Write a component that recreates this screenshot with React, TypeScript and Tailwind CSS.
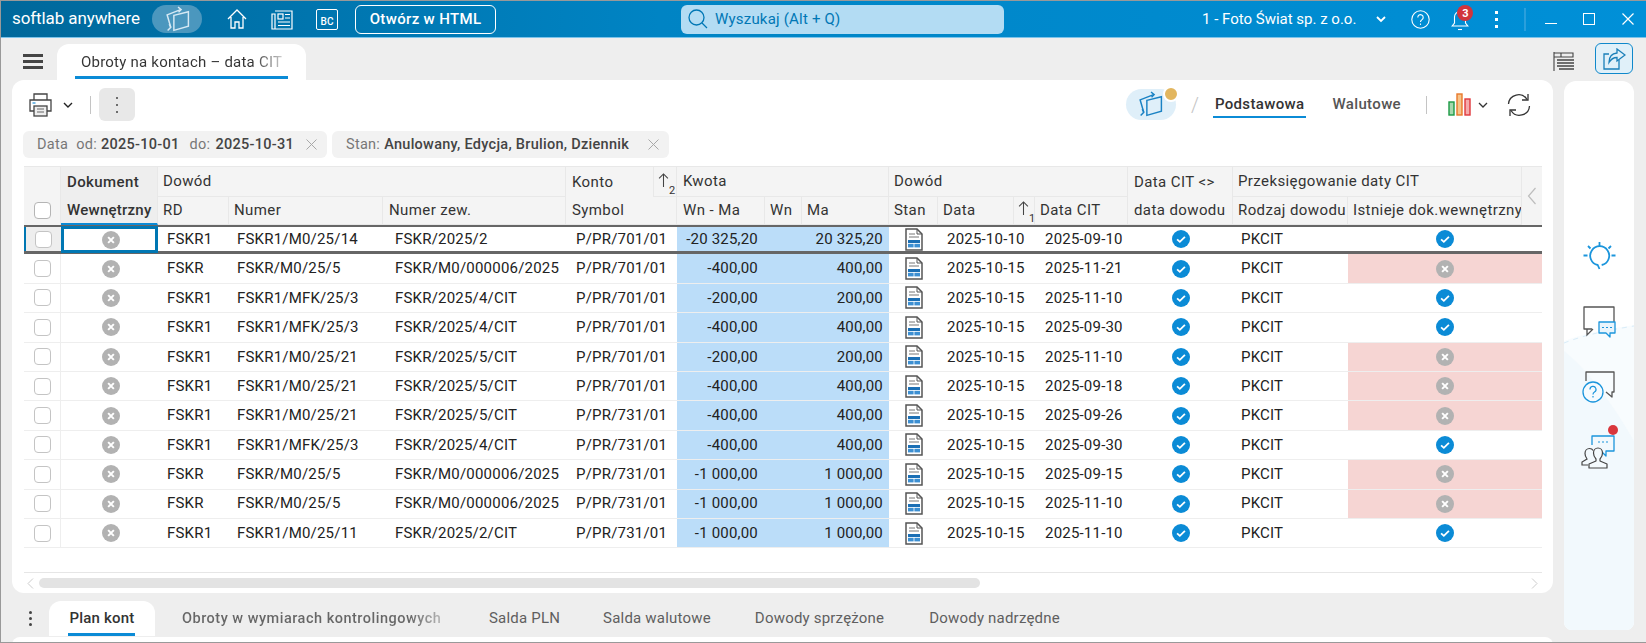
import React from 'react'

const GRID =
  'grid grid-cols-[37px_97px_71px_154px_183px_111px_88px_37px_87px_49px_76px_21px_93px_105px_115px_174px_20px]'

const ROWS = [
  ['FSKR1', 'FSKR1/M0/25/14', 'FSKR/2025/2', '701', '-20 325,20', '20 325,20', '2025-10-10', '2025-09-10', true],
  ['FSKR', 'FSKR/M0/25/5', 'FSKR/M0/000006/2025', '701', '-400,00', '400,00', '2025-10-15', '2025-11-21', false],
  ['FSKR1', 'FSKR1/MFK/25/3', 'FSKR/2025/4/CIT', '701', '-200,00', '200,00', '2025-10-15', '2025-11-10', true],
  ['FSKR1', 'FSKR1/MFK/25/3', 'FSKR/2025/4/CIT', '701', '-400,00', '400,00', '2025-10-15', '2025-09-30', true],
  ['FSKR1', 'FSKR1/M0/25/21', 'FSKR/2025/5/CIT', '701', '-200,00', '200,00', '2025-10-15', '2025-11-10', false],
  ['FSKR1', 'FSKR1/M0/25/21', 'FSKR/2025/5/CIT', '701', '-400,00', '400,00', '2025-10-15', '2025-09-18', false],
  ['FSKR1', 'FSKR1/M0/25/21', 'FSKR/2025/5/CIT', '731', '-400,00', '400,00', '2025-10-15', '2025-09-26', false],
  ['FSKR1', 'FSKR1/MFK/25/3', 'FSKR/2025/4/CIT', '731', '-400,00', '400,00', '2025-10-15', '2025-09-30', true],
  ['FSKR', 'FSKR/M0/25/5', 'FSKR/M0/000006/2025', '731', '-1 000,00', '1 000,00', '2025-10-15', '2025-09-15', false],
  ['FSKR', 'FSKR/M0/25/5', 'FSKR/M0/000006/2025', '731', '-1 000,00', '1 000,00', '2025-10-15', '2025-11-10', false],
  ['FSKR1', 'FSKR1/M0/25/11', 'FSKR/2025/2/CIT', '731', '-1 000,00', '1 000,00', '2025-10-15', '2025-11-10', true],
] as const

function Check() {
  return (
    <svg width="18" height="18" viewBox="0 0 17 17">
      <circle cx="8.5" cy="8.5" r="8.5" fill="#0b8bd6" />
      <path d="M4.8 8.8l2.6 2.4 4.8-4.8" fill="none" stroke="#fff" strokeWidth="1.7" />
    </svg>
  )
}

function Cross() {
  return (
    <svg width="18" height="18" viewBox="0 0 17 17">
      <circle cx="8.5" cy="8.5" r="8.5" fill="#b2b2b2" />
      <path d="M5.8 5.8l5.4 5.4M11.2 5.8l-5.4 5.4" fill="none" stroke="#fff" strokeWidth="1.9" />
    </svg>
  )
}

function DocIcon() {
  return (
    <svg width="18" height="23" viewBox="0 0 18 23">
      <path d="M1 1h11l5 5v16H1z" fill="#fff" stroke="#555" strokeWidth="1.5" />
      <path d="M12 1v5h5" fill="none" stroke="#555" strokeWidth="1" />
      <path d="M4 6h6M4 9h10" stroke="#777" strokeWidth="1" />
      <rect x="3" y="12" width="12" height="3" fill="#1b6fb5" />
      <rect x="3" y="15.8" width="5.6" height="3.6" fill="#3c8fd2" />
      <rect x="9.4" y="15.8" width="5.6" height="3.6" fill="#3c8fd2" />
    </svg>
  )
}

function Layers({ color, size = 26 }: { color: string; size?: number }) {
  return (
    <svg width={size} height={size} viewBox="0 0 26 26" fill="none" stroke={color} strokeWidth="1.4">
      <path d="M9.5 9l14-3.500v14l-14 4z" />
      <path d="M6.500 20.500L3 8.500 16 3.500" />
      <path d="M13.500 1l3 2.500-2.500 2.500M3.500 23.500l3-3-1.500-3" />
    </svg>
  )
}

function Sort({ n, low }: { n: string; low?: boolean }) {
  return (
    <div className="relative h-full w-full">
      <svg className={`absolute left-[4px] ${low ? 'top-[6px]' : 'top-[4px]'}`} width="11" height="15" viewBox="0 0 12 17" fill="none" stroke="#444" strokeWidth="1.2">
        <path d="M6 1v15M1 6l5-5 5 5" />
      </svg>
      <span className={`absolute left-[15px] text-[11px] leading-none tracking-normal text-[#333] ${low ? 'top-[18px]' : 'top-[16px]'}`}>{n}</span>
    </div>
  )
}

function Head({ className = '', children }: { className?: string; children?: React.ReactNode }) {
  return (
    <div className={`flex items-center pl-[5px] whitespace-nowrap overflow-hidden text-[#333] tracking-[0.4px] border-r border-b border-[#e8e8e8] ${className}`}>
      {children}
    </div>
  )
}

function Row({ row, active }: { row: (typeof ROWS)[number]; active: boolean }) {
  const [rd, nr, zew, sym, wnma, ma, data, cit, ok] = row
  const txt = 'flex items-center whitespace-nowrap overflow-hidden'
  return (
    <div
      className={`${GRID} text-[15px] text-[#222] tracking-[0.2px] ${
        active ? 'h-[29.4px] border-t-2 border-b-[3px] border-[#666]' : 'h-[29.4px] border-b border-[#eeeeee]'
      }`}
    >
      <div className={`flex items-center justify-center border-r border-[#eee] ${active ? 'bg-[#eeeeee] border-l-[2px] border-l-[#0077b3]' : ''}`}>
        <span className="block h-[17px] w-[17px] rounded-[4px] border border-[#c4c4c4] bg-white" />
      </div>
      <div className={`flex items-center justify-center pl-[2px] ${active ? 'border-[3px] border-[#0077b3] -mt-[1px] -mb-[2px]' : ''}`}>
        <Cross />
      </div>
      <div className={`${txt} pl-[9px]`}>{rd}</div>
      <div className={`${txt} pl-[8px]`}>{nr}</div>
      <div className={`${txt} pl-[12px]`}>{zew}</div>
      <div className={`${txt} pl-[10px]`}>P/PR/{sym}/01</div>
      <div className={`${txt} justify-end pr-[7px] bg-[#bbddf9]`}>{wnma}</div>
      <div className="bg-[#bbddf9]" />
      <div className={`${txt} justify-end pr-[6px] bg-[#bbddf9]`}>{ma}</div>
      <div className="flex items-center justify-center">
        <DocIcon />
      </div>
      <div className={`${txt} col-span-2 pl-[9px]`}>{data}</div>
      <div className={`${txt} pl-[10px]`}>{cit}</div>
      <div className="flex items-center justify-center">
        <Check />
      </div>
      <div className={`${txt} pl-[8px]`}>PKCIT</div>
      <div className={`flex items-center justify-center col-span-2 ${ok ? '' : 'bg-[#f6d5d3]'}`}>
        {ok ? <Check /> : <Cross />}
      </div>
    </div>
  )
}

function Table() {
  return (
    <div className="ml-[12px] mt-[8px] w-[1518px] text-[15px]">
      <div className={`${GRID} grid-rows-[30px_28px] border-t border-[#e8e8e8] bg-[#f4f4f4]`}>
        <div className="row-span-2 flex items-end justify-center pb-[6px] border-r border-[#e8e8e8]">
          <span className="block h-[17px] w-[17px] rounded-[4px] border border-[#b5b5b5] bg-white" />
        </div>
        <Head className="bg-[#eeeeee] font-medium pl-[6px] border-b-0">Dokument</Head>
        <Head className="col-span-3">Dowód</Head>
        <div className="flex border-r border-[#e8e8e8]">
          <div className="flex-1 flex items-center pl-[6px] tracking-[0.4px] text-[#333]">Konto</div>
          <div className="w-[23px] border-l border-b border-[#e8e8e8]">
            <Sort n="2" low />
          </div>
        </div>
        <Head className="col-span-3 pl-[6px]">Kwota</Head>
        <Head className="col-span-4">Dowód</Head>
        <div className="flex items-center pl-[6px] text-[#333] tracking-[0.4px] border-r border-[#e8e8e8]">{'Data CIT <>'}</div>
        <Head className="col-span-2">Przeksięgowanie daty CIT</Head>
        <div className="row-span-2 flex items-center justify-center">
          <svg width="10" height="18" viewBox="0 0 10 18" fill="none" stroke="#bdbdbd" strokeWidth="1.2">
            <path d="M8.5 1L1.500 9l7 8" />
          </svg>
        </div>
        <div className="flex items-center pl-[6px] whitespace-nowrap bg-[#eeeeee] font-medium text-[#333] tracking-[0.25px] border-b-2 border-[#0b8bd6] border-r border-r-[#e8e8e8]">
          Wewnętrzny
        </div>
        <Head>RD</Head>
        <Head>Numer</Head>
        <Head className="pl-[6px]">Numer zew.</Head>
        <Head className="pl-[6px]">Symbol</Head>
        <Head className="pl-[6px]">Wn - Ma</Head>
        <Head>Wn</Head>
        <Head>Ma</Head>
        <Head>Stan</Head>
        <Head>Data</Head>
        <div className="border-r border-b border-[#e8e8e8]">
          <Sort n="1" />
        </div>
        <Head>Data CIT</Head>
        <div className="flex items-center pl-[6px] whitespace-nowrap text-[#333] tracking-[0.4px] border-r border-b border-[#e8e8e8]">data dowodu</div>
        <Head>Rodzaj dowodu</Head>
        <Head>Istnieje dok.wewnętrzny</Head>
      </div>
      {ROWS.map((row, i) => (
        <Row key={i} row={row} active={i === 0} />
      ))}
    </div>
  )
}

function Toolbar() {
  return (
    <div className="flex items-center h-[33px] pl-[17px] pr-[22px]">
      <svg width="23" height="24" viewBox="0 0 23 24" fill="none" stroke="#444" strokeWidth="1.3">
        <path d="M5 7V1h13v6" />
        <path d="M5 18H1V7h21v11h-4" />
        <rect x="5" y="13" width="13" height="10" fill="#eee" />
        <path d="M8 16h7M8 19h7" stroke="#666" strokeWidth="1" />
        <path d="M3.500 10h3" stroke="#2e96d8" />
      </svg>
      <svg className="ml-[11px]" width="10" height="6" viewBox="0 0 10 6" fill="none" stroke="#222" strokeWidth="1.4">
        <path d="M1 1l4 4 4-4" />
      </svg>
      <span className="ml-[17px] h-[18px] w-px bg-[#c4c4c4]" />
      <div className="ml-[8px] flex h-[33px] w-[36px] flex-col items-center justify-center gap-[5px] rounded-md bg-[#e8e8e8]">
        <span className="block h-[2px] w-[2px] rounded-full bg-[#444]" />
        <span className="block h-[2px] w-[2px] rounded-full bg-[#444]" />
        <span className="block h-[2px] w-[2px] rounded-full bg-[#444]" />
      </div>
      <div className="ml-auto relative flex h-[31px] w-[50px] items-center justify-center rounded-[16px] bg-[#dfeff9]">
        <Layers color="#1a82c4" size={27} />
        <span className="absolute -right-[3px] -top-[3px] h-[16px] w-[16px] rounded-full border-2 border-white bg-[#e2b65f]" />
      </div>
      <span className="ml-[15px] text-[20px] font-light text-[#c4c4c4]">/</span>
      <div className="ml-[14px] relative flex h-[33px] items-center px-[2px] font-medium text-[15px] tracking-[0.35px] text-[#333]">
        Podstawowa
        <span className="absolute left-0 right-0 bottom-[3px] h-[2px] bg-[#0b8bd6]" />
      </div>
      <span className="ml-[26px] font-medium text-[15px] tracking-[0.35px] text-[#555]">Walutowe</span>
      <span className="ml-[25px] h-[18px] w-px bg-[#c4c4c4]" />
      <svg className="ml-[21px]" width="23" height="23" viewBox="0 0 23 23" strokeWidth="1.4">
        <rect x="1" y="9" width="5" height="13" fill="#a5d8ae" stroke="#1c9a45" />
        <rect x="9" y="1" width="5" height="21" fill="#f6c48a" stroke="#e8792b" />
        <rect x="17" y="6" width="5" height="16" fill="#f5abab" stroke="#e0383c" />
      </svg>
      <svg className="ml-[7px]" width="10" height="6" viewBox="0 0 10 6" fill="none" stroke="#333" strokeWidth="1.3">
        <path d="M1 1l4 4 4-4" />
      </svg>
      <svg className="ml-[19px]" width="24" height="24" viewBox="0 0 24 24" fill="none" stroke="#333" strokeWidth="1.3">
        <path d="M1.500 11A10 10 0 0 1 20 6.500" />
        <path d="M21 1v6h-6" />
        <path d="M22.500 13A10 10 0 0 1 4 17.500" />
        <path d="M3 23v-6h6" />
      </svg>
    </div>
  )
}

function Chips() {
  const x = (
    <svg className="ml-auto mr-[10px]" width="11" height="11" viewBox="0 0 11 11" fill="none" stroke="#a8a8a8" strokeWidth="1">
      <path d="M.5.5l10 10M10.500.5l-10 10" />
    </svg>
  )
  return (
    <div className="mt-[10px] ml-[11px] flex h-[27px] gap-[5px] text-[14.5px] tracking-[0.28px]">
      <div className="flex w-[304px] items-center rounded-md bg-[#f2f2f2] pl-[14px]">
        <span className="text-[#777]">Data</span>
        <span className="ml-[8px] text-[#777]">od:</span>
        <span className="ml-[4px] font-medium text-[#444]">2025-10-01</span>
        <span className="ml-[10px] text-[#777]">do:</span>
        <span className="ml-[5px] font-medium text-[#444]">2025-10-31</span>
        {x}
      </div>
      <div className="flex w-[337px] items-center rounded-md bg-[#f2f2f2] pl-[14px]">
        <span className="text-[#777]">Stan:</span>
        <span className="ml-[4px] font-medium text-[#444] whitespace-nowrap">Anulowany, Edycja, Brulion, Dziennik</span>
        {x}
      </div>
    </div>
  )
}

function TitleBar() {
  return (
    <div className="flex h-[37px] shrink-0 items-center border-b border-[#7cc3ea] bg-gradient-to-r from-[#00689b] via-[#0084c4] via-40% to-[#0090d8] text-white">
      <span className="ml-[11px] w-[129px] text-[17px] tracking-[-0.1px] whitespace-nowrap">softlab anywhere</span>
      <div className="ml-[11px] flex h-[28px] w-[50px] items-center justify-center rounded-[14px] bg-[#4b97be]">
        <Layers color="#d6e9f4" size={27} />
      </div>
      <svg className="ml-[25px]" width="20" height="20" viewBox="0 0 20 20" fill="none" stroke="#fff" strokeWidth="1.3">
        <path d="M1 10l9-9 9 9M4 8v11h4v-6h4v6h4V8" />
      </svg>
      <svg className="ml-[23px]" width="23" height="21" viewBox="0 0 23 21" fill="none" stroke="#fff" strokeWidth="1.2">
        <path d="M5 2h17v18H2V5h3v15" />
        <rect x="8" y="5" width="5" height="5" />
        <path d="M15 5.500h5M15 9h5M8 13h12M8 16.500h12" />
      </svg>
      <div className="ml-[23px] flex h-[21px] w-[22px] items-end justify-center rounded-[2px] border border-white pb-[1px] text-[10px] font-medium leading-[12px]">
        BC
      </div>
      <div className="ml-[17px] flex h-[29px] w-[141px] items-center justify-center rounded-md border border-white text-[15px] font-medium tracking-[0.35px]">
        Otwórz w HTML
      </div>
      <div className="ml-[185px] flex h-[29px] w-[323px] items-center rounded-md bg-[#b3dcf3] pl-[7px] text-[15px] tracking-[0.2px] text-[#0077b5]">
        <svg width="20" height="20" viewBox="0 0 20 20" fill="none" stroke="#0077b5" strokeWidth="1.3">
          <circle cx="8.500" cy="8.500" r="7.500" />
          <path d="M14 14l5 5" />
        </svg>
        <span className="ml-[7px]">Wyszukaj (Alt + Q)</span>
      </div>
      <span className="ml-[198px] text-[15px] whitespace-nowrap">1 - Foto Świat sp. z o.o.</span>
      <svg className="ml-[20px]" width="10" height="7" viewBox="0 0 10 7" fill="none" stroke="#fff" strokeWidth="1.8">
        <path d="M1 1l4 4 4-4" />
      </svg>
      <svg className="ml-[25px]" width="19" height="19" viewBox="0 0 19 19" fill="none" stroke="#fff" strokeWidth="1.1">
        <circle cx="9.500" cy="9.500" r="8.700" />
        <path d="M6.800 7.400a2.700 2.700 0 1 1 4.200 2.200c-1 .7-1.500 1.200-1.500 2.400" />
        <path d="M9.500 13.500v1.400" />
      </svg>
      <div className="relative ml-[21px] h-[22px] w-[18px]">
        <svg className="absolute left-0 top-[2px]" width="18" height="21" viewBox="0 0 18 21" fill="none" stroke="#fff" strokeWidth="1.1">
          <path d="M9 1.500a5.500 5.500 0 0 0-5.500 5.500v6L1.200 16h15.600L14.500 13V7A5.500 5.500 0 0 0 9 1.500z" />
          <path d="M7 19.500h4" />
        </svg>
        <span className="absolute -right-[4px] -top-[3px] flex h-[16px] w-[16px] items-center justify-center rounded-full bg-[#d1343c] text-[11px] font-bold leading-none">
          3
        </span>
      </div>
      <div className="ml-[26px] flex flex-col gap-[4px]">
        <span className="block h-[3px] w-[3px] bg-white" />
        <span className="block h-[3px] w-[3px] bg-white" />
        <span className="block h-[3px] w-[3px] bg-white" />
      </div>
      <span className="ml-[26px] h-[23px] w-[2px] bg-[#2a9fdc]" />
      <span className="ml-[19px] mt-[9px] h-[1.5px] w-[12px] bg-white" />
      <span className="ml-[26px] h-[12px] w-[12px] border-[1.5px] border-white" />
      <svg className="ml-[27px]" width="12" height="12" viewBox="0 0 12 12" fill="none" stroke="#fff" strokeWidth="1.2">
        <path d="M.5.5l11 11M11.500.5l-11 11" />
      </svg>
    </div>
  )
}

function SidePanel() {
  return (
    <div className="relative ml-[11px] mt-px flex h-[549px] w-[70px] flex-col items-center overflow-hidden rounded-t-xl rounded-b-lg bg-white">
      <svg className="absolute left-0 top-[240px]" width="70" height="309" viewBox="0 0 70 309">
        <path d="M0 20C20 12 45 8 70 4V309H0z" fill="#f8fcfe" />
        <path d="M0 30C25 50 50 85 70 120V309H0z" fill="#f2f9fd" />
        <path d="M0 22C20 14 45 9 70 5" fill="none" stroke="#d9ecf8" strokeWidth="1" strokeDasharray="5 5" />
      </svg>
      <svg className="relative mt-[158px]" width="33" height="33" viewBox="0 0 33 33" fill="none" stroke="#1b95dc" strokeWidth="1.8">
        <path d="M16.500 30l-1.800-4a9.500 9.500 0 1 1 4 0" />
        <path d="M16.500 3v4M5 7l2.500 2.500M28 7l-2.500 2.500M0.500 16.500h4M28.500 16.500h4" />
      </svg>
      <svg className="relative mt-[33px]" width="34" height="33" viewBox="0 0 34 33" fill="none">
        <path d="M10 24H2V2h30v15" stroke="#555" strokeWidth="1.3" strokeLinejoin="round" />
        <path d="M5 24v6l6-6" stroke="#555" strokeWidth="1.3" />
        <path d="M17 17h16v11h-5v4l-4-4h-7z" fill="#e9f5fc" stroke="#1b95dc" strokeWidth="1.3" strokeLinejoin="round" />
        <path d="M20 22.500h2M24 22.500h2M28 22.500h2" stroke="#1b95dc" strokeWidth="1.2" />
      </svg>
      <svg className="relative mt-[33px]" width="34" height="32" viewBox="0 0 34 32" fill="none">
        <path d="M4 10V1h28v20h-2v5l-6-5" stroke="#555" strokeWidth="1.3" strokeLinejoin="round" />
        <circle cx="11" cy="21" r="10" fill="#f6fbfe" stroke="#1b95dc" strokeWidth="1.3" />
        <path d="M8 18.500a3 3 0 1 1 4.500 2.500c-1 .6-1.500 1.200-1.500 2.500M11 25v1.500" stroke="#1b95dc" strokeWidth="1.2" />
      </svg>
      <div className="relative mt-[24px] h-[42px] w-[36px]">
        <svg className="absolute left-0 top-0" width="36" height="42" viewBox="0 0 36 42" fill="none">
          <path d="M11 18V9h22v15h-8v5l-5-5" stroke="#1b95dc" strokeWidth="1.3" strokeLinejoin="round" />
          <path d="M17 15h2M21 15h2M25 15h2" stroke="#1b95dc" strokeWidth="1.2" />
          <path d="M7 38H1v-3l5-3c-1.500-2-2-3.500-2-5.500 0-3 2-5 4.500-5 1.500 0 3 .8 3.700 2" stroke="#444" strokeWidth="1.2" />
          <path d="M8 41v-4l7-3v-2c-1.500-1.500-2.500-3.500-2.500-6 0-3 2-5 4.500-5s4.500 2 4.500 5c0 2.500-1 4.500-2.500 6v2l7 3v4z" fill="#f4fafd" stroke="#444" strokeWidth="1.2" strokeLinejoin="round" />
        </svg>
        <span className="absolute -top-[2px] right-[-1px] h-[10px] w-[10px] rounded-full bg-[#d9363c]" />
      </div>
    </div>
  )
}

export default function App() {
  return (
    <div className="flex h-[643px] w-[1646px] flex-col overflow-hidden border-l border-t border-b border-[#999] bg-[#eeeeee] font-['Roboto',sans-serif]">
      <TitleBar />
      <div className="flex h-[42px] shrink-0 items-end">
        <div className="mb-[11px] ml-[22px] flex w-[20px] flex-col gap-[3px]">
          <span className="block h-[3px] bg-[#444]" />
          <span className="block h-[3px] bg-[#444]" />
          <span className="block h-[3px] bg-[#444]" />
        </div>
        <div className="relative ml-[14px] flex h-[36px] w-[249px] items-center rounded-t-xl bg-white pl-[24px] text-[15px] tracking-[0.22px] text-[#333]">
          <span className="bg-gradient-to-r from-[#333] from-85% to-[#ccc] bg-clip-text text-transparent whitespace-nowrap">Obroty na kontach – data CIT</span>
          <span className="absolute bottom-[1px] left-[18px] h-[3px] w-[213px] bg-[#0b8bd6]" />
        </div>
        <svg className="mb-[9px] ml-[1247px]" width="22" height="19" viewBox="0 0 22 19" fill="none" stroke="#444" strokeWidth="1.1">
          <path d="M1 0v19M1 1h7v4H1M8 1h12v4H8" />
          <path d="M4 8h17M4 11h17M4 14h17M6 17h15" strokeWidth="1.4" />
        </svg>
        <div className="mb-[6px] ml-[20px] flex h-[31px] w-[38px] items-center justify-center rounded-md border border-[#0f88cb] bg-[#e0f0f9]">
          <svg width="24" height="22" viewBox="0 0 24 22" fill="none" stroke="#1a7fb9" strokeWidth="1.3">
            <path d="M17 12v9H2V6h5" />
            <path d="M15 1l8 6-8 6V9.500c-4 0-6 1.500-8 5 0-6 3-9 8-9.500z" fill="#e0f0f9" />
          </svg>
        </div>
      </div>
      <div className="flex min-h-0 flex-1">
        <div className="ml-[11px] w-[1541px]">
          <div className="flex h-[513px] flex-col rounded-xl bg-white pt-[8px]">
            <Toolbar />
            <Chips />
            <Table />
            <div className="mx-[12px] mt-auto flex h-[21px] w-[1518px] items-center border-t border-[#e6e6e6]">
              <svg className="ml-[3px]" width="7" height="11" viewBox="0 0 7 11" fill="none" stroke="#ccc">
                <path d="M6 .5L1 5.500l5 5" />
              </svg>
              <span className="ml-[5px] block h-[10px] w-[941px] rounded-full bg-[#e3e3e3]" />
              <svg className="ml-[551px]" width="7" height="11" viewBox="0 0 7 11" fill="none" stroke="#ccc">
                <path d="M1 .5l5 5-5 5" />
              </svg>
            </div>
          </div>
          <div className="mt-[8px] flex h-[35px] items-center text-[15px] tracking-[0.2px] text-[#5f5f5f]">
            <div className="ml-[17px] flex flex-col gap-[3px]">
              <span className="block h-[3px] w-[3px] rounded-full bg-[#444]" />
              <span className="block h-[3px] w-[3px] rounded-full bg-[#444]" />
              <span className="block h-[3px] w-[3px] rounded-full bg-[#444]" />
            </div>
            <div className="relative ml-[17px] flex h-[35px] w-[106px] items-center justify-center rounded-t-xl bg-white font-medium text-[#333]">
              Plan kont
              <span className="absolute bottom-0 left-[19px] h-[3px] w-[67px] bg-[#0b8bd6]" />
            </div>
            <span className="ml-[27px] w-[267px] whitespace-nowrap bg-gradient-to-r from-[#666] from-85% to-[#ccc] bg-clip-text text-[14.5px] font-medium tracking-[0.5px] text-transparent">
              Obroty w wymiarach kontrolingowych
            </span>
            <span className="ml-[40px]">Salda PLN</span>
            <span className="ml-[43px]">Salda walutowe</span>
            <span className="ml-[44px]">Dowody sprzężone</span>
            <span className="ml-[45px]">Dowody nadrzędne</span>
          </div>
          <div className="mt-px h-[8px] rounded-t-lg bg-white" />
        </div>
        <SidePanel />
      </div>
    </div>
  )
}
